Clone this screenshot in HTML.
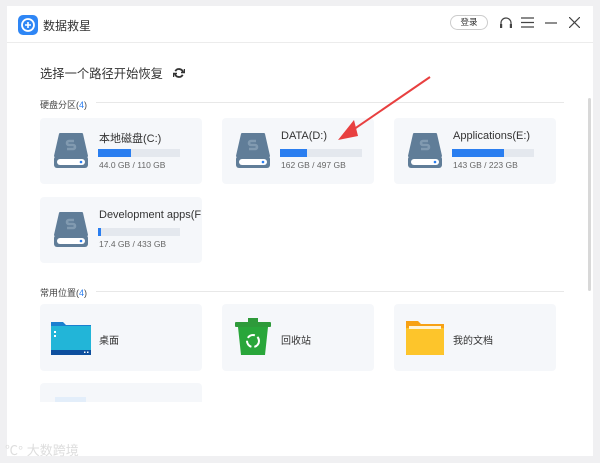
<!DOCTYPE html>
<html><head><meta charset="utf-8"><style>
*{margin:0;padding:0;box-sizing:border-box}
body{width:600px;height:463px;background:#f0f0f2;font-family:"Liberation Sans","Noto Sans CJK SC",sans-serif;position:relative;overflow:hidden;color:#333}
.win{position:absolute;left:7px;top:6px;width:586px;height:450px;background:#fff}
.a{position:absolute}
.hdr{position:absolute;left:0;top:36px;width:586px;height:1px;background:#ececec}
.card{position:absolute;background:#f5f7fa;border-radius:4px}
.t{position:absolute;font-size:11px;color:#333;white-space:nowrap}
.bar{position:absolute;left:58px;top:31px;width:82px;height:8px;background:#e4e8ee}
.bar i{display:block;height:8px;background:#2a7ef0}
.sz{position:absolute;left:59px;top:42px;font-size:8.5px;color:#666}
.disk{position:absolute;left:13px;top:15px}
.sec{position:absolute;font-size:9px;color:#444}
.sec b{font-weight:normal;color:#2a7ef0}
.line{position:absolute;height:1px;background:#e8e8e8}
</style></head><body>
<div class="win">
  <div class="a" style="left:11px;top:9px;width:20px;height:20px;border-radius:5px;background:#2e86f5"></div>
  <svg class="a" style="left:11px;top:9px" width="20" height="20"><circle cx="10" cy="10" r="6" fill="none" stroke="#fff" stroke-width="1.8"/><path d="M10 7v6M7 10h6" stroke="#fff" stroke-width="1.6"/></svg>
  <div class="t" style="left:36px;top:11px;font-size:12px">数据救星</div>
  <div class="a" style="left:443px;top:9px;width:38px;height:15px;border:1px solid #ccc;border-radius:8px;font-size:8.5px;text-align:center;line-height:13px">登录</div>
  <svg class="a" style="left:491px;top:9px" width="16" height="16"><path d="M3 10V8a5 5 0 0 1 10 0v2" fill="none" stroke="#444" stroke-width="1.2"/><rect x="2" y="9" width="2.2" height="4" fill="#444"/><rect x="11.8" y="9" width="2.2" height="4" fill="#444"/></svg>
  <svg class="a" style="left:514px;top:11px" width="13" height="11"><path d="M0 1h13M0 5.5h13M0 10h13" stroke="#444" stroke-width="1.2"/></svg>
  <svg class="a" style="left:538px;top:16px" width="12" height="2"><path d="M0 1h12" stroke="#444" stroke-width="1.2"/></svg>
  <svg class="a" style="left:562px;top:11px" width="11" height="11"><path d="M0 0L11 11M11 0L0 11" stroke="#444" stroke-width="1.2"/></svg>
  <div class="hdr"></div>
  <div class="t" style="left:33px;top:58px;font-size:12.3px;color:#333">选择一个路径开始恢复</div>
  <svg class="a" style="left:166px;top:61px" width="12" height="12"><path d="M10 5A4.2 4.2 0 0 0 2.3 4.2M2 7a4.2 4.2 0 0 0 7.7 0.8" fill="none" stroke="#333" stroke-width="1.8"/><path d="M8 5.5h3.5V2M4 6.5H0.5V10" fill="none" stroke="#333" stroke-width="1.5"/></svg>
  <div class="sec" style="left:33px;top:92px">硬盘分区(<b>4</b>)</div>
  <div class="line" style="left:89px;top:96px;width:468px"></div>
  <div class="sec" style="left:33px;top:280px">常用位置(<b>4</b>)</div>
  <div class="line" style="left:89px;top:285px;width:468px"></div>
  <div class="a" style="left:581px;top:92px;width:3px;height:193px;background:#d8d8d8;border-radius:2px"></div>
</div>

<svg width="0" height="0" style="position:absolute"><defs><g id="dk"><path d="M7 1h22l5 22H2z" fill="#607d98" stroke="#607d98" stroke-width="2" stroke-linejoin="round"/><rect x="1" y="23" width="34" height="12" rx="3" fill="#607d98"/><rect x="4" y="26" width="28" height="6" rx="3" fill="#fff"/><circle cx="28" cy="29" r="1.3" fill="#2a7ef0"/><path d="M21 8h-5a2 2 0 0 0 0 4h4a2 2 0 0 1 0 4h-6" fill="none" stroke="#819ab0" stroke-width="2.6"/></g></defs></svg>

<div class="card" style="left:40px;top:118px;width:162px;height:66px"><svg class="disk" width="36" height="36"><use href="#dk"/></svg><div class="t" style="left:59px;top:12px">本地磁盘(C:)</div><div class="bar"><i style="width:33px"></i></div><div class="sz">44.0 GB / 110 GB</div></div>
<div class="card" style="left:222px;top:118px;width:152px;height:66px"><svg class="disk" width="36" height="36"><use href="#dk"/></svg><div class="t" style="left:59px;top:12px">DATA(D:)</div><div class="bar"><i style="width:27px"></i></div><div class="sz">162 GB / 497 GB</div></div>
<div class="card" style="left:394px;top:118px;width:162px;height:66px"><svg class="disk" width="36" height="36"><use href="#dk"/></svg><div class="t" style="left:59px;top:12px">Applications(E:)</div><div class="bar"><i style="width:52px"></i></div><div class="sz">143 GB / 223 GB</div></div>
<div class="card" style="left:40px;top:197px;width:162px;height:66px;overflow:hidden"><svg class="disk" width="36" height="36"><use href="#dk"/></svg><div class="t" style="left:59px;top:12px">Development apps(F:</div><div class="bar"><i style="width:3px"></i></div><div class="sz">17.4 GB / 433 GB</div></div>

<div class="card" style="left:40px;top:304px;width:162px;height:67px">
<svg class="a" style="left:10px;top:16px" width="42" height="36"><path d="M1 2h12l3 3h25v30H1z" fill="#1a7fd0"/><rect x="1" y="6" width="40" height="29" fill="#22b5d8"/><rect x="1" y="30" width="40" height="5" fill="#0d4f9e"/><rect x="4" y="11" width="2" height="2" fill="#fff"/><rect x="4" y="15" width="2" height="2" fill="#fff"/><rect x="34" y="31.5" width="1.5" height="1.5" fill="#fff"/><rect x="37" y="31.5" width="1.5" height="1.5" fill="#fff"/></svg>
<div class="t" style="left:59px;top:28px;font-size:10px">桌面</div></div>
<div class="card" style="left:222px;top:304px;width:152px;height:67px">
<svg class="a" style="left:12px;top:13px" width="38" height="40"><rect x="14" y="1" width="10" height="5" fill="#2e9a3a"/><rect x="1" y="5" width="36" height="5" rx="1" fill="#2e9a3a"/><path d="M4 10h30l-3 28H7z" fill="#29a63a"/><circle cx="19" cy="24" r="6" fill="none" stroke="#fff" stroke-width="2" stroke-dasharray="8 3"/></svg>
<div class="t" style="left:59px;top:28px;font-size:10px">回收站</div></div>
<div class="card" style="left:394px;top:304px;width:162px;height:67px">
<svg class="a" style="left:11px;top:16px" width="40" height="36"><path d="M1 1h12l3 3h23v31H1z" fill="#f7a114"/><rect x="1" y="8" width="38" height="27" rx="1" fill="#fdc52b"/><rect x="4" y="6" width="32" height="3" fill="#fff4d8"/></svg>
<div class="t" style="left:59px;top:28px;font-size:10px">我的文档</div></div>
<div class="card" style="left:40px;top:383px;width:162px;height:19px;border-radius:4px 4px 0 0"><div class="a" style="left:15px;top:14px;width:31px;height:5px;background:#e3eefa"></div></div>

<div class="t" style="left:5px;top:440px;font-size:13px;color:#ddd">℃° 大数跨境</div>

<svg class="a" style="left:330px;top:74px" width="105" height="75"><path d="M100 3L14 62" stroke="#e84040" stroke-width="2"/><path d="M8 66L24 46L28 62z" fill="#e84040"/></svg>
</body></html>
